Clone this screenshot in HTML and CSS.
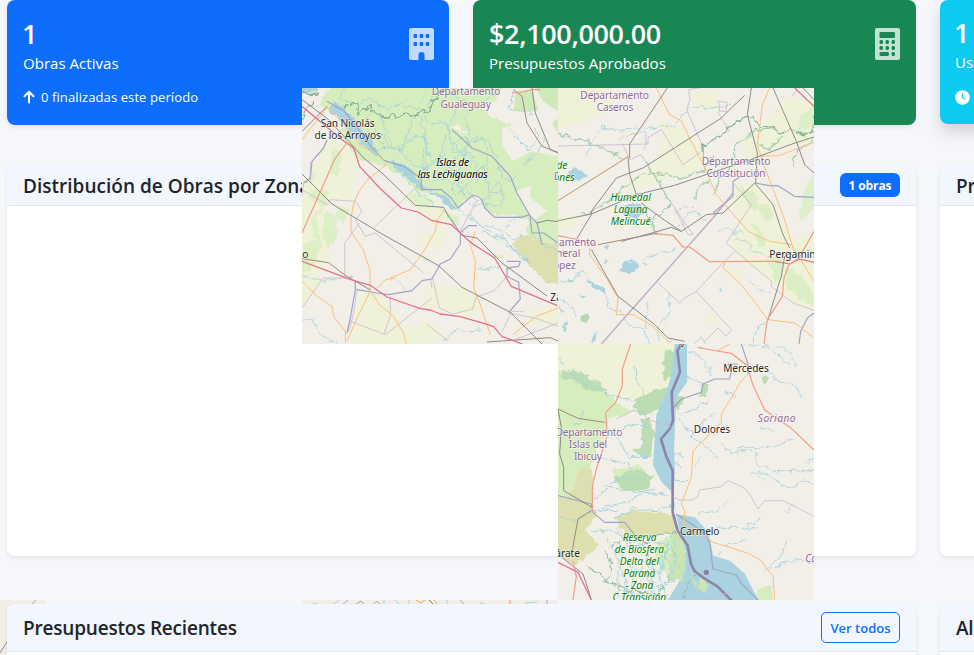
FILE: index.html
```
<!DOCTYPE html>
<html lang="es">
<head>
<meta charset="utf-8">
<title>Panel de Obras</title>
<link rel="stylesheet" href="styles.css">
</head>
<body>
<main class="dashboard">
  <section class="row stats">
    <article class="stat blue">
      <div class="stat-top">
        <div><h3 class="value">1</h3><p class="label">Obras Activas</p></div>
        <svg class="stat-icon" viewBox="0 0 25 32"><path fill-rule="evenodd" d="M2.500 0h20A2.500 2.500 0 0 1 25 2.500v27a2.500 2.500 0 0 1-2.500 2.500H15.500v-5a3 3 0 0 0-6 0v5h-7A2.500 2.500 0 0 1 0 29.500v-27A2.500 2.500 0 0 1 2.500 0zM5.500 6a1 1 0 0 0-1 1v2a1 1 0 0 0 1 1h1.500a1 1 0 0 0 1-1V7a1 1 0 0 0-1-1zm6.200 0a1 1 0 0 0-1 1v2a1 1 0 0 0 1 1h1.500a1 1 0 0 0 1-1V7a1 1 0 0 0-1-1zm6 0a1 1 0 0 0-1 1v2a1 1 0 0 0 1 1h1.500a1 1 0 0 0 1-1V7a1 1 0 0 0-1-1zM5.500 14a1 1 0 0 0-1 1v2a1 1 0 0 0 1 1h1.500a1 1 0 0 0 1-1v-2a1 1 0 0 0-1-1zm6.200 0a1 1 0 0 0-1 1v2a1 1 0 0 0 1 1h1.500a1 1 0 0 0 1-1v-2a1 1 0 0 0-1-1zm6 0a1 1 0 0 0-1 1v2a1 1 0 0 0 1 1h1.500a1 1 0 0 0 1-1v-2a1 1 0 0 0-1-1z"/></svg>
      </div>
      <p class="note"><svg class="arrow" viewBox="0 0 12 14"><path d="M6 12.500V2M1.500 6.300 6 1.700l4.500 4.600"/></svg><span>0 finalizadas este período</span></p>
    </article>
    <article class="stat green">
      <div class="stat-top">
        <div><h3 class="value amount">$2,100,000.00</h3><p class="label approved">Presupuestos Aprobados</p></div>
        <svg class="stat-icon" viewBox="0 0 25 32"><path fill-rule="evenodd" d="M2 0h21a2 2 0 0 1 2 2v28a2 2 0 0 1-2 2H2a2 2 0 0 1-2-2V2a2 2 0 0 1 2-2zM5.500 4a1 1 0 0 0-1 1v4a1 1 0 0 0 1 1H19a1 1 0 0 0 1-1V5a1 1 0 0 0-1-1zM5.500 12l-1 1v2l1 1H7l1-1v-2l-1-1zm6 0l-1 1v2l1 1H13l1-1v-2l-1-1zm6 0l-1 1v2l1 1H19l1-1v-2l-1-1zM5.500 18l-1 1v2l1 1H7l1-1v-2l-1-1zm6 0l-1 1v2l1 1H13l1-1v-2l-1-1zm6 0l-1 1v2l1 1H19l1-1v-2l-1-1zM5.500 24l-1 1v2l1 1H13l1-1v-2l-1-1zm12 0l-1 1v2l1 1H19l1-1v-2l-1-1z"/></svg>
      </div>
    </article>
    <article class="stat cyan">
      <h3 class="value">1</h3><p class="label">Usuarios</p>
      <p class="note"><svg class="clock" viewBox="0 0 16 16"><circle cx="8" cy="8" r="7.800"/><path d="M8 3.500V8l3 2"/></svg></p>
    </article>
  </section>

  <section class="row zones">
    <article class="card"><header><h2 class="zone-title">Distribución de Obras por Zona</h2><span class="badge">1 obras</span></header></article>
    <article class="card"><header><h2>Progreso</h2></header></article>
  </section>

  <section class="row lower">
    <article class="card"><header><h2>Presupuestos Recientes</h2><a class="button">Ver todos</a></header></article>
    <article class="card"><header><h2>Alertas</h2></header></article>
  </section>

  <div class="map">
  <svg class="tile tile-a" viewBox="0 0 768 768">
    <defs><filter id="meander" x="-5%" y="-5%" width="110%" height="110%"><feTurbulence type="fractalNoise" baseFrequency=".05" numOctaves="2" seed="4"/><feDisplacementMap in="SourceGraphic" scale="22" xChannelSelector="R" yChannelSelector="G"/></filter></defs>
    <rect width="768" height="768" fill="#f2efe9"/>
    <g class="land" fill="#eff2d9">
      <path d="M75 150 165 185 168 235 150 330 75 350 95 450 55 560 60 590 0 650V290L40 230z"/>
      <path d="M300 300 365 310 430 355 450 390 410 420 340 370 300 330zM350 430h90l-20 50-70-5zM390 585l130 25 20 50-40 30-60-15-80-10zM170 610l60 5 50 50 15 60 95-25 40 50-50 18H150l10-90zM680 665l88-15v65l-100-15z"/>
    </g>
    <g class="land" fill="#d6edbe">
      <path d="M95-20H620L575 45 510 60 450 120 500 145 570 205 625 265 665 360 690 400 788 410V460l-60 5-55-25 5-45-35-12-80-5-35-60-40 10-15 35-35-10-40-35-55-2-45-55-65-35-55-8-55-60-5-65-65-45z"/>
      <path d="M455 100 475 60 530 45 568 90 640 110 690 180 788 200V410l-98-10-25-40-40-95-55-60-70-60z"/>
      <path d="M30 250l10 15-20 40 60 5-10 45-30 30 20 90-35 70-25 10v-80l40-20-15-60 35-40-40-25zM90 180l30 20-10 70-25-20zM110 350l30 15-15 40-25-15zM325 310l60 30 5 20-60-15zM425 370l35 10 10 30-25-5zM75 370l30 20 0 60-25 40-20-50zM570 495l35 5-10 15-30-5zM260 570l15 0-8 15zM355 500l25 5-10 12z" opacity=".75"/>
    </g>
    <path fill="#f2efe9" d="M600 120l65-15 50 65 53 25-5 10-75-15-55 30-33-50zM643 310l45-18-5 35 52 42-40 30-35-55z"/>
    <path fill="#cfe9b9" d="M640 10l50-5 20 63-75 2zM700 0h68v70l-45-30zM750 105l18-15v45z"/>
    <path class="land" fill="#dde0ae" d="M650 447l20-7 60 27 58-7v132l-58-12-60-65-40-45z"/>
    <g class="land" fill="#aad3df"><path d="M90 35l35 25 35 35 70 95-5 20-55-55-50-55-35-30zM260 220l50 8 65 75-15 5zM380 305l60 25 25 35-20-5zM0 0h45v12L0 16z"/></g>
    <g class="river thin">
      <path d="M130 0l-20 30 50 20 45-20 50 35 40-20 50 20 30-50M140 75q30 50 60 10t60 60 60-15 50 25 70-25 60 35M185 100q40 10 50 60t80 0 50 40 75-15 30 60 80-20M180 145q60-30 75 20t70-5 50 60 70 10 80 55M225 190q50-35 90 20t75 10 80 70 90 30 40 40M365 70q5 50 40 35t40 50 60 10 50 70 50 55M260 225l80 50 100 70 80 55 120 90 50 40M270 230l70 80 80 55 65 70M410 270l60 20 70 55 50 10M430 110l40 80 70 45 20 65"/>
      <path d="M480 130q20 50 50 25t55 65 60 40M640 0l-20 60 70 20M620 115l20 30 40 40 30-35-10-30M655 235l45-30 30-55M690 195l-10 25M285 575l30 35M520 545l55-6 30-15M0 694q30-10 45 25t40 40 15 9M0 565l65 12 90-10M500 380l40 30 50 15 30 45 60 50M540 435l60 10 60 70M420 760l40-30 80-4M690 440l40 35 38 10M660 380q-55 20-45 55t45 5M400 0l-25 60M435 10l80 45 70-40"/>
    </g>
    <g class="bank"><path d="M75 40l50 28 32 40 48 65 40 44 65 20 48 36 0 32 60 0 30 25 20 30 40-35q30-10 40 35l30 28 80 0 25-8 7 55 35 0 50 35 38-5M450 125l60 55 60 25 55 60 20 50 40 70 20 20 15 65"/></g>
    <g class="green-line"><path d="M0 8l20 12 28-2M128 65l5-15 30 0 5 25 28-18 12-4 0 15 20 8 22 15 25-15 10 15 18-9 8-10 25 15 20-18 20 5 15-20-5-20 20 0 0-15 25-15 5-22 15-5M0 95l10-35 25-20"/></g>
    <g class="boundary"><path d="M75 155l-10 25-40 45 0 55-20 5-5 40M0 305l75 45 10-15 75 5 20 30-20 25 30 50 30-10 145 120M128 570V465l45-60M215 420l135-130M128 570l-65 0L0 660M145 700l105 40 140-110M375 710l65 50M265 625v60l-20 55M392 570l20 90 40 18 60-15 10-35 55-20 40-45M390 600l-5-30M475 430l50-95M620 675l80 15 68 25M600 730l30-60 35 0M640 755l128-50M165 600l-10 75-15 55"/></g>
    <g class="bank"><path d="M165 605l60 10 35 5 70-12 30-30 30-5 25-45 30-15 30-45 0-35 25-20 25 0M615 520l40 0-5 15-35 5 0 25 35 18 5 50-35 40M160 575l0 30-15 85-10 45M75 155l-10 25-35 40-5 50-20 15"/></g>
    <g class="road orange"><path d="M0 155L75 57l45 45 60 75 40 15 35 35-60 50q-55 60-48 155l35 50 22 65 0 60 30 45 40 32 30 50 10 38M205 610l-40 80-30 70M265 570l60-25 40-55 35-60 5-35 25-30M520 430l-15 40 15 50-5 80 20 50 30 90M0 580l45 45 45 30 5 30 35 45v35M768 660l-65 25-70 55M225 600l25-25 30-5"/></g>
    <g class="rail"><path d="M0 35l80 60 60 65 45 50 55 45 100 97 85 6 15 27 40 57 45 8 75 75 135 99M0 258l90 90 75 45 75 45 170 95 70 65 145 75 95 95M0 130L75 55M690 0l10 75 45 110 23 10M555 762l190-13 23 10M705 405l30-8 33 4"/></g>
    <g class="road brown"><path d="M635 5l25 20 15 80 45 70 48 18M0 512l80 12 50 38 75 44"/></g>
    <g class="road red"><path d="M0 55l120 100 35 25 18 55 60 65 65 60 50 12 40 25 60 13 60 55 70 45 50 85 138 58M0 520l155 58 50 14 50 35 100 35 30 4 30 12 60 8 70 20 30 10 25 30 62 22"/></g>
    <g class="road coral"><path d="M0 435l100-225 35-45M630 15l30-3 30-7 25 0"/></g>
    <g class="map-text">
      <text x="492" y="22" textLength="206" class="region">Departamento</text><text x="491" y="59" textLength="151" class="region">Gualeguay</text>
      <text x="137" y="117" textLength="162">San Nicolás</text><text x="137" y="153" textLength="199">de los Arroyos</text>
      <g class="italic"><text x="452" y="233" textLength="99">Islas de</text><text x="452" y="269" textLength="210">las Lechiguanas</text></g>
      <text x="10" y="510">o</text><text x="745" y="640" class="start">Za</text><text x="756" y="277" class="start region">D</text>
    </g>
  </svg>

  <svg class="tile tile-b" viewBox="0 0 768 768">
    <rect width="768" height="768" fill="#f2efe9"/>
    <g fill="#eff2d9"><path d="M0 0h165v60L80 100 0 125zM400 10h80v55l-70-5zM305 95l60 20 75 75-10 60-90 20-130 40-10-25 95-60 20-90zM550 150l60-40 70-80 88 0v130l-130 30-60 60zM0 385h75l-40 40-35 5zM500 530l60 20-20 30-40-30zM440 680l40-10-5 35-30-5z"/><path d="M535 285l60 0 40 45 45 90 30 35 58-15V665l-60-20-65-60-75-60-60-55 40-50-25-75z"/></g>
    <g class="land" fill="#d6edbe" opacity=".7"><path d="M550 300l40 10 15 50-20 10-30-45zM600 355l30-10 20 45-30 10zM580 400l25 20 20 50-20 10zM625 515l50-10 0 60-20 15zM685 530l50 40 33 50v40l-65-45-20-30zM740 300l38-50v110l-60 40zM720 90l48-40v60l-50 25z"/></g>
    <g class="land" fill="#aad3df"><ellipse cx="55" cy="260" rx="28" ry="17"/><ellipse cx="225" cy="369" rx="31" ry="22"/><ellipse cx="214" cy="536" rx="26" ry="19"/><path d="M88 570l20 18 30 5v20l-28-8-25-25zM5 655l15 15-10 10zM68 620l20 8-15 4zM35 570l10 10-10 8zM12 720l14-22 5 10-12 25zM108 740l8-10-4 30-15 8zM135 475h15v14zM140 515l15 6-12 5zM255 520l12 4-5 7zM485 598l10 8-10 2z"/></g>
    <path fill="#b5d8b0" d="M68 685l20-10 7 13-10 18-17-8z"/>
    <g class="river thin"><path d="M85 203q35-85 50-85l55 8 80-5 80-10 45-55 60 5 60-10M180 155q50-25 85-20l-5 55M475 430l30-10 20 15 30 0M525 450q40-5 55 35l60 25M570 575l30 30 40 5M330 615q15 70-10 80t-20 60M130 600q25 30 25 60l35 10 20 40 45 15 20 43M260 510l40-15 50-10M365 415q40-70 60-30l20 15M345 375l35-22 35 4M585 768q0-45 35-65M700 25l20-20M5 575q30 20 50-10t40 5M0 630l35 20 20 40M270 640l-5 90"/></g>
    <g class="boundary"><path d="M0 174l270-6 0-20 40-23 65 105 63-45-52-120 10-30-4-30 65-11M480 72l35 60M485 70l-3-30 25 3-3 28-22-2M525 285l55 65-75 115 135 115 0 15 65 50 63 22M530 490l-50 50-65 70-35 20-15 15-65-60M415 610l105 115-15 20-25-25-40 40M195 170l20 45 35-15 80 130 75 110-15 0-40-80M410 766l20-18 12 20"/></g>
    <path class="boundary wide" d="M130 768L465 390l60-75"/>
    <g class="bank"><path d="M590 285l45 8 25 0 50 32 58 3M465 375l60-50 0-45 25-15M768 675l-20 15-20 40-5 38"/></g>
    <g class="green-line pale"><path d="M0 135l85 25 70 30 40 20M70 380q100-40 130-85l60-40 65 5 40 10 70-20 30-45M410 335l15-40 30-20M470 320l15-50 45-50 0-45 65-50 45-5M705 230l15-45 48-30M595 170l35 15 50-40M270 400l75-50M340 350l-75-125M265 370l30 70"/></g>
    <g class="green-line"><path d="M435 205v-30l60-40 40-35 40-15 30 28 30 0 30 25 40-15 25 20 38-15 0-40"/></g>
    <g class="road orange"><path d="M295 0l40 80 35 20 65 130 40 90 95 110 65 30 65 10 68 110M635 0l-22 50-15 120 15 50 65 170 30 100M602 205l60-2 106-40M95 480l0 20 50 70 35 60-5 50 50 0 60 35 50 50M500 525l-5 15 55 50 80 105 80 10 58 45"/></g>
    <g class="rail"><path d="M0 398l100-20 130-55M55 455l45-75 0-10 75-100 80-30 235-150 30-30 40-38M210 210l5 50 20 60M250 345l60 45 60 40 75-50 50-5 95-90 30 35 25 30 30 90 20 40M300 430l40-12 30 12M300 430l-110 30M235 320l115-28 235-80 120-45 63-20M580 0l-12 80 30 115-5 90M645 0l70 160 25 70 28 25M700 495l-20 10-10 60-10 30-30 100M100 485l80 140 110 85 40 40 50 10M735 0l33 35"/></g>
    <g class="road brown"><path d="M328 0L215 168v42M120 470l180-35"/><path stroke="#bd9365" d="M0 338L212 205"/></g>
    <g class="road red"><path d="M710 0l58 55M650 520l45 8 30-15 43 10"/></g>
    <g class="road coral"><path d="M290 437l55 5 30 35 20 0 60 44 195-1M0 443l50 10 65 18M768 430l-45 80-30 20-15 40-5 55-45 70-10 73"/></g>
    <g class="map-text region"><text x="170" y="33" textLength="206">Departamento</text><text x="171" y="69" textLength="110">Caseros</text><text x="534" y="232" textLength="206">Departamento</text><text x="534" y="268" textLength="177">Constitución</text><text x="114" y="473" class="end">tamento</text><text x="67" y="507" class="end">neral</text><text x="53" y="543" class="end">ópez</text></g>
    <g class="map-text park"><text x="218" y="339" textLength="121">Humedal</text><text x="218" y="375" textLength="101">Laguna</text><text x="218" y="411" textLength="119">Melincué</text><text x="28" y="243" class="end">de</text><text x="50" y="278" class="end">ones</text></g>
    <g class="map-text"><text x="634" y="509" class="start">Pergamino</text></g>
  </svg>

  <svg class="tile tile-c" viewBox="0 0 768 768">
    <rect width="768" height="768" fill="#f2efe9"/>
    <path class="land" fill="#eff2d9" d="M-20-20h370l-15 140-65 50-80 0-90-40-120-70z"/>
    <path class="land" fill="#d6edbe" d="M-20 75l120 30 90 80-40 30-10 60-50 100-25 5-40 90-45-15zM100 205l60-25 75 20-80 25zM160 380l80-20 40 40-90 40zM300 590l60-25 25 60 0 75-50 5-45-60zM600 735l40-10 5 53h-60z"/>
    <g class="land" fill="#bcdcb4"><path d="M10 80l45 0 50 25 45 35-60 0-40-30-45-10zM240 160l60-25 30-5-20 60-60 25-25-30zM245 225l30 0 15 50-15 70-50-20 30-30zM165 405l60-30 60 20-15 40-60 10zM320 20h30v80l-35 10zM430 120l25 0-10 35-20 5zM345 150l35 10-20 40-15-10zM615 95l18 5-5 25-15-10z"/></g>
    <path class="land" fill="#dde0ae" d="M60 385l25-18 22 10-5 120 18 12-35 50 40 45-75 60-70-40V460l50 5zM170 525l40-25 100 5 40 10 5 50-75 10-75-5z"/>
    <path fill="#aad3df" d="M350 0h37v115l-32 45-4 80-3 80 3 60-5 70 8 60 57 10 40 45 15 70 50 15 45 40 40 78H330l45-75-5-110-20-90-10-50-30-30-25-50 10-150 30-70 15-50z"/>
    <path class="land" fill="#cce5b5" d="M345 550l30 30 10 60-10 75-40-10zM395 690l15 15 10 35 5-40 30 25-15 20-30-15z"/>
    <g class="river"><path d="M0 50l90 80 75 25 85 20M230 60l5 50 25 40M45 250l30-25 0-25M360 220l30 40M380 255q30 0 20 25l65 45 15 20M400 265l70-60M370 215l85-45M345 320l30 20M350 345l20 35M350 410l40 0M180 280l30 60 60 0M175 260l55-20 40 5M120 340l90 20 40 25M135 430l60-30 70 5M105 470l50-40 80 15 60-10M120 495l80-20 60-30 70 10M165 525l60-30 70 5 50-20M0 520l60 10 40-30 80 0M100 560l60 0 60 40"/></g>
    <g class="river thin"><path d="M580 60q60 10 70 50l60 10 20 40M555 0l80 10 60 55M655 5q45 15 60 60M490 300q20 35 65 20t40 45l60 15 133 0M540 340l0-30 100 0 70-25M575 385q50-10 80 25t80 0l53 20M620 410l-20-15M740 355l38-15M605 250l45 10M420 510l60-10 30-30M475 550l60 0 70 5M560 552l50-35M650 670l55-25 73 15M690 590l-30 60-40 30M485 620l-20 30M405 370l25-30M505 600l60-10M420 35q35 30 40 60M465 70l-15 15M500 140l30 20M385 20l40 15M390 100l60 25M680 510l35-35"/><path d="M150 580l80 198M175 550l40 60 65-15 50 5-20 100 20 78M240 570q40 60 30 130l35 78M290 585q50 50 50 110l-70 83M325 580l50 110-80 40M345 565l-40 120-65 0-60-60M180 680l0 98M200 690l0 88M220 670l5 108M250 665l-5 113M280 650l0 128M310 630l-10 148M350 580l-5 110"/></g>
    <g class="bank"><path d="M345 190q-5 10 25-25l60-20 5-25 35-15 45 0 5-25-10-20 30 0M550 0l20 60 0 30M0 455l40 10 60 15 5 25 35 30 60 0 40 50 30 15"/><path d="M355 510l75 50 25 35 10 80 70 18 15 25 50 50"/></g>
    <path class="channel" d="M370 0l-12 20 8 65-25 60 4 85-10 25-26 30 15 50 20 45v125l15 55 30 45 10 55 10 20 25 20 45 28 60 60"/>
    <circle cx="445" cy="685" r="8" fill="#8f7b9d"/>
    <g class="boundary"><path d="M175 225l50-25 35 5 5 20 75 25M345 458l20 10 35 0 20-10 5-20 65-10 20-18 45 20 20 20 25 45 20-25 55 0 50 25 43 22M435 768l90-25"/></g>
    <g class="green-line faint"><path d="M150 615l45-30 120-15 45-5M140 620l20 35 0 35-20 20 80 30 80 10 30-30 0-25M380 768l5-50 40-35M90 670l100 70 80 5"/></g>
    <g class="road orange"><path d="M480 20l35-20M570 90l-20 20-35 60-25 40 0 25-85 85-5 80-30 80 10 20 0 45 40 20 45 30 50 15 60 20 35 20 25 35 10 10 5 75"/></g>
    <g class="rail"><path d="M0 195l10 55-5 80 12 40 0 70 85 50M5 635l70 55 15 45 10 33"/></g>
    <g class="road brown"><path d="M0 195l60 28 80 12M100 500l-40 25-20 110"/></g>
    <g class="road coral"><path d="M218 0l-25 75 0 50-20 50-30 30 5 70-30 90-15 60 0 75M420 10l40 8 60 10 45 35 20 60 35 75 80 55 68 65M45 768l10-70-10-45"/></g>
    <path class="road red" d="M0 655l60 30 40 83"/>
    <g class="map-text"><text x="430" y="0">y Bentos</text><text x="564" y="83" textLength="137">Mercedes</text><text x="462" y="266" textLength="109">Dolores</text><text x="425" y="574" textLength="118">Carmelo</text><text x="66" y="639" class="end">árate</text></g>
    <g class="map-text region"><text x="93" y="277" textLength="200">Departamento</text><text x="90" y="313" textLength="115">Islas del</text><text x="90" y="349" textLength="84">Ibicuy</text><text x="656" y="234" textLength="113" class="soft-italic">Soriano</text><text x="742" y="655" class="start soft-italic">Co</text></g>
    <g class="map-text park"><text x="245" y="591" textLength="101">Reserva</text><text x="244" y="627" textLength="148">de Biosfera</text><text x="244" y="663" textLength="118">Delta del</text><text x="244" y="699" textLength="96">Paraná</text><text x="244" y="735" textLength="83">- Zona</text><text x="244" y="770" textLength="161">C Transición</text></g>
  </svg>

  <svg class="tile strip-left" viewBox="0 0 46 55"><rect width="46" height="55" fill="#f2efe9"/><path d="M0 53 10 37" fill="none" stroke="#829087"/><path d="M31 5l5-5" fill="none" stroke="#c2a3c0"/></svg>
  <svg class="tile strip-right" viewBox="0 0 256 6"><rect width="256" height="6" fill="#f2efe9"/><g fill="none"><path stroke="#aad3df" d="M11 3l5 1M32 4l5-4M82 4V0M93 0l4 4M107 4V0M145 4V0M178 3l5 1M223 3l12-1"/><path stroke="#c2a3c0" d="M40 5l6-5M53 5l6-4 4 4M70 5l5-4 4 4M158 0l5 5M245 5V0"/><path stroke="#fca348" d="M114 0l5 3 4-3M132 0l4 5"/><path stroke="#f48e75" d="M208 0v5"/><path stroke="#777" d="M127 0l5 5"/></g></svg>
  </div>
</main>
</body>
</html>
```
FILE: styles.css
```
* { box-sizing: border-box; }
body { margin: 0; background: #f5f7fb; color: #212529; font-family: "Open Sans", "Noto Sans", sans-serif; overflow: hidden; }
h2, h3, p { margin: 0; }
.dashboard { position: relative; width: 974px; height: 655px; padding-left: 7px; overflow: hidden; }
.row { display: grid; gap: 24px; }
.stats { grid-template-columns: 442px 443px 442px; height: 125px; align-items: start; }
.zones { grid-template-columns: 909px 442px; margin-top: 40px; height: 391px; }
.lower { grid-template-columns: 909px 442px; margin-top: 48px; height: 300px; position: relative; z-index: 2; }
.stat { height: 125px; padding: 17px 15px 0 16px; border-radius: 8px; color: #fff; box-shadow: 0 2px 5px rgba(0,0,0,.08); }
.stat-top { display: flex; justify-content: space-between; }
.blue { background: #0d6efd; }
.green { background: #198754; padding-right: 16px; }
.cyan { background: #0dcaf0; height: 124px; padding-top: 16px; padding-left: 15px; box-shadow: 0 8px 16px rgba(0,0,0,.15); }
.value { margin-left: -1px; font-size: 27px; line-height: 34px; font-weight: 600; letter-spacing: -.35px; }
.amount { margin-left: 0; }
.label { font-size: 15px; line-height: 24px; letter-spacing: .04px; }
.stat-icon { width: 25px; height: 32px; margin-top: 11px; fill: #fff; opacity: .75; }
.note { display: flex; align-items: center; gap: 6px; margin-top: 12px; font-size: 13px; line-height: 20px; letter-spacing: .1px; }
.arrow { width: 12px; height: 14px; fill: none; stroke: #fff; stroke-width: 2; stroke-linecap: round; stroke-linejoin: round; }
.clock { width: 15px; height: 15px; margin-top: 4px; fill: #fff; }
.clock path { fill: none; stroke: #0dcaf0; stroke-width: 1.2; }
.card { background: #fff; border-radius: 8px; box-shadow: 0 2px 5px rgba(0,0,0,.07); overflow: hidden; }
.card header { display: flex; align-items: center; justify-content: space-between; height: 41px; padding: 0 16px; background: #f2f7ff; border-bottom: 1px solid #dbe8f8; }
.lower .card header { height: 48px; }
.card h2 { font-size: 19px; line-height: 24px; font-weight: 570; letter-spacing: -.2px; white-space: nowrap; }
.zones .card h2 { padding-top: 2px; }
.card .zone-title { letter-spacing: .02px; }
.badge { display: flex; align-items: center; justify-content: center; width: 60px; height: 24px; border-radius: 6px; background: #0d6efd; color: #fff; font-size: 12px; font-weight: 700; letter-spacing: -.1px; }
.button { display: flex; align-items: center; justify-content: center; width: 79px; height: 31px; border: 1px solid #0d6efd; border-radius: 5px; color: #0d6efd; font-size: 13px; font-weight: 600; }

/* Map tiles lie over the cards */
.map { position: absolute; inset: 0; z-index: 1; }
.tile { position: absolute; display: block; width: 256px; height: 256px; overflow: hidden; }
.tile-a { left: 302px; top: 88px; }
.tile-b { left: 558px; top: 88px; }
.tile-c { left: 558px; top: 344px; }
.strip-left { left: 0; top: 600px; width: 46px; height: 55px; }
.strip-right { left: 302px; top: 600px; height: 6px; }
.tile path { stroke-linejoin: round; }
.land, .river, .green-line { filter: url(#meander); }
.river, .bank, .green-line, .boundary, .rail, .road, .channel { fill: none; stroke-width: 3; }
.river { stroke: #a6d2df; }
.thin { stroke-width: 2.6; }
.bank { stroke: #9da5c4; stroke-width: 3.5; }
.green-line { stroke: #83b291; stroke-width: 4; }
.green-line.pale { stroke: #a7cfac; }
.green-line.faint { stroke: #8dbb9b; stroke-width: 3; }
.boundary { stroke: #cdbccf; stroke-width: 2.6; }
.boundary.wide { stroke: #c0aac6; stroke-width: 4; }
.rail { stroke: #858381; stroke-width: 2.8; }
.orange { stroke: #fac078; }
.brown { stroke: #a28a7d; }
.red { stroke: #e66f8e; stroke-width: 3.8; }
.coral { stroke: #f39a84; stroke-width: 3.5; }
.channel { stroke: #8c86ae; stroke-width: 8; }
.map-text { font-family: "Noto Sans", sans-serif; font-size: 30.5px; fill: #282828; text-anchor: middle; stroke: rgba(255,255,255,.65); stroke-width: 4px; paint-order: stroke; stroke-linejoin: round; }
.region { fill: #936898; }
.park { fill: #078009; font-style: italic; }
.italic { fill: #000; font-style: italic; }
.soft-italic { font-style: italic; }
.start { text-anchor: start; }
.end { text-anchor: end; }
```
